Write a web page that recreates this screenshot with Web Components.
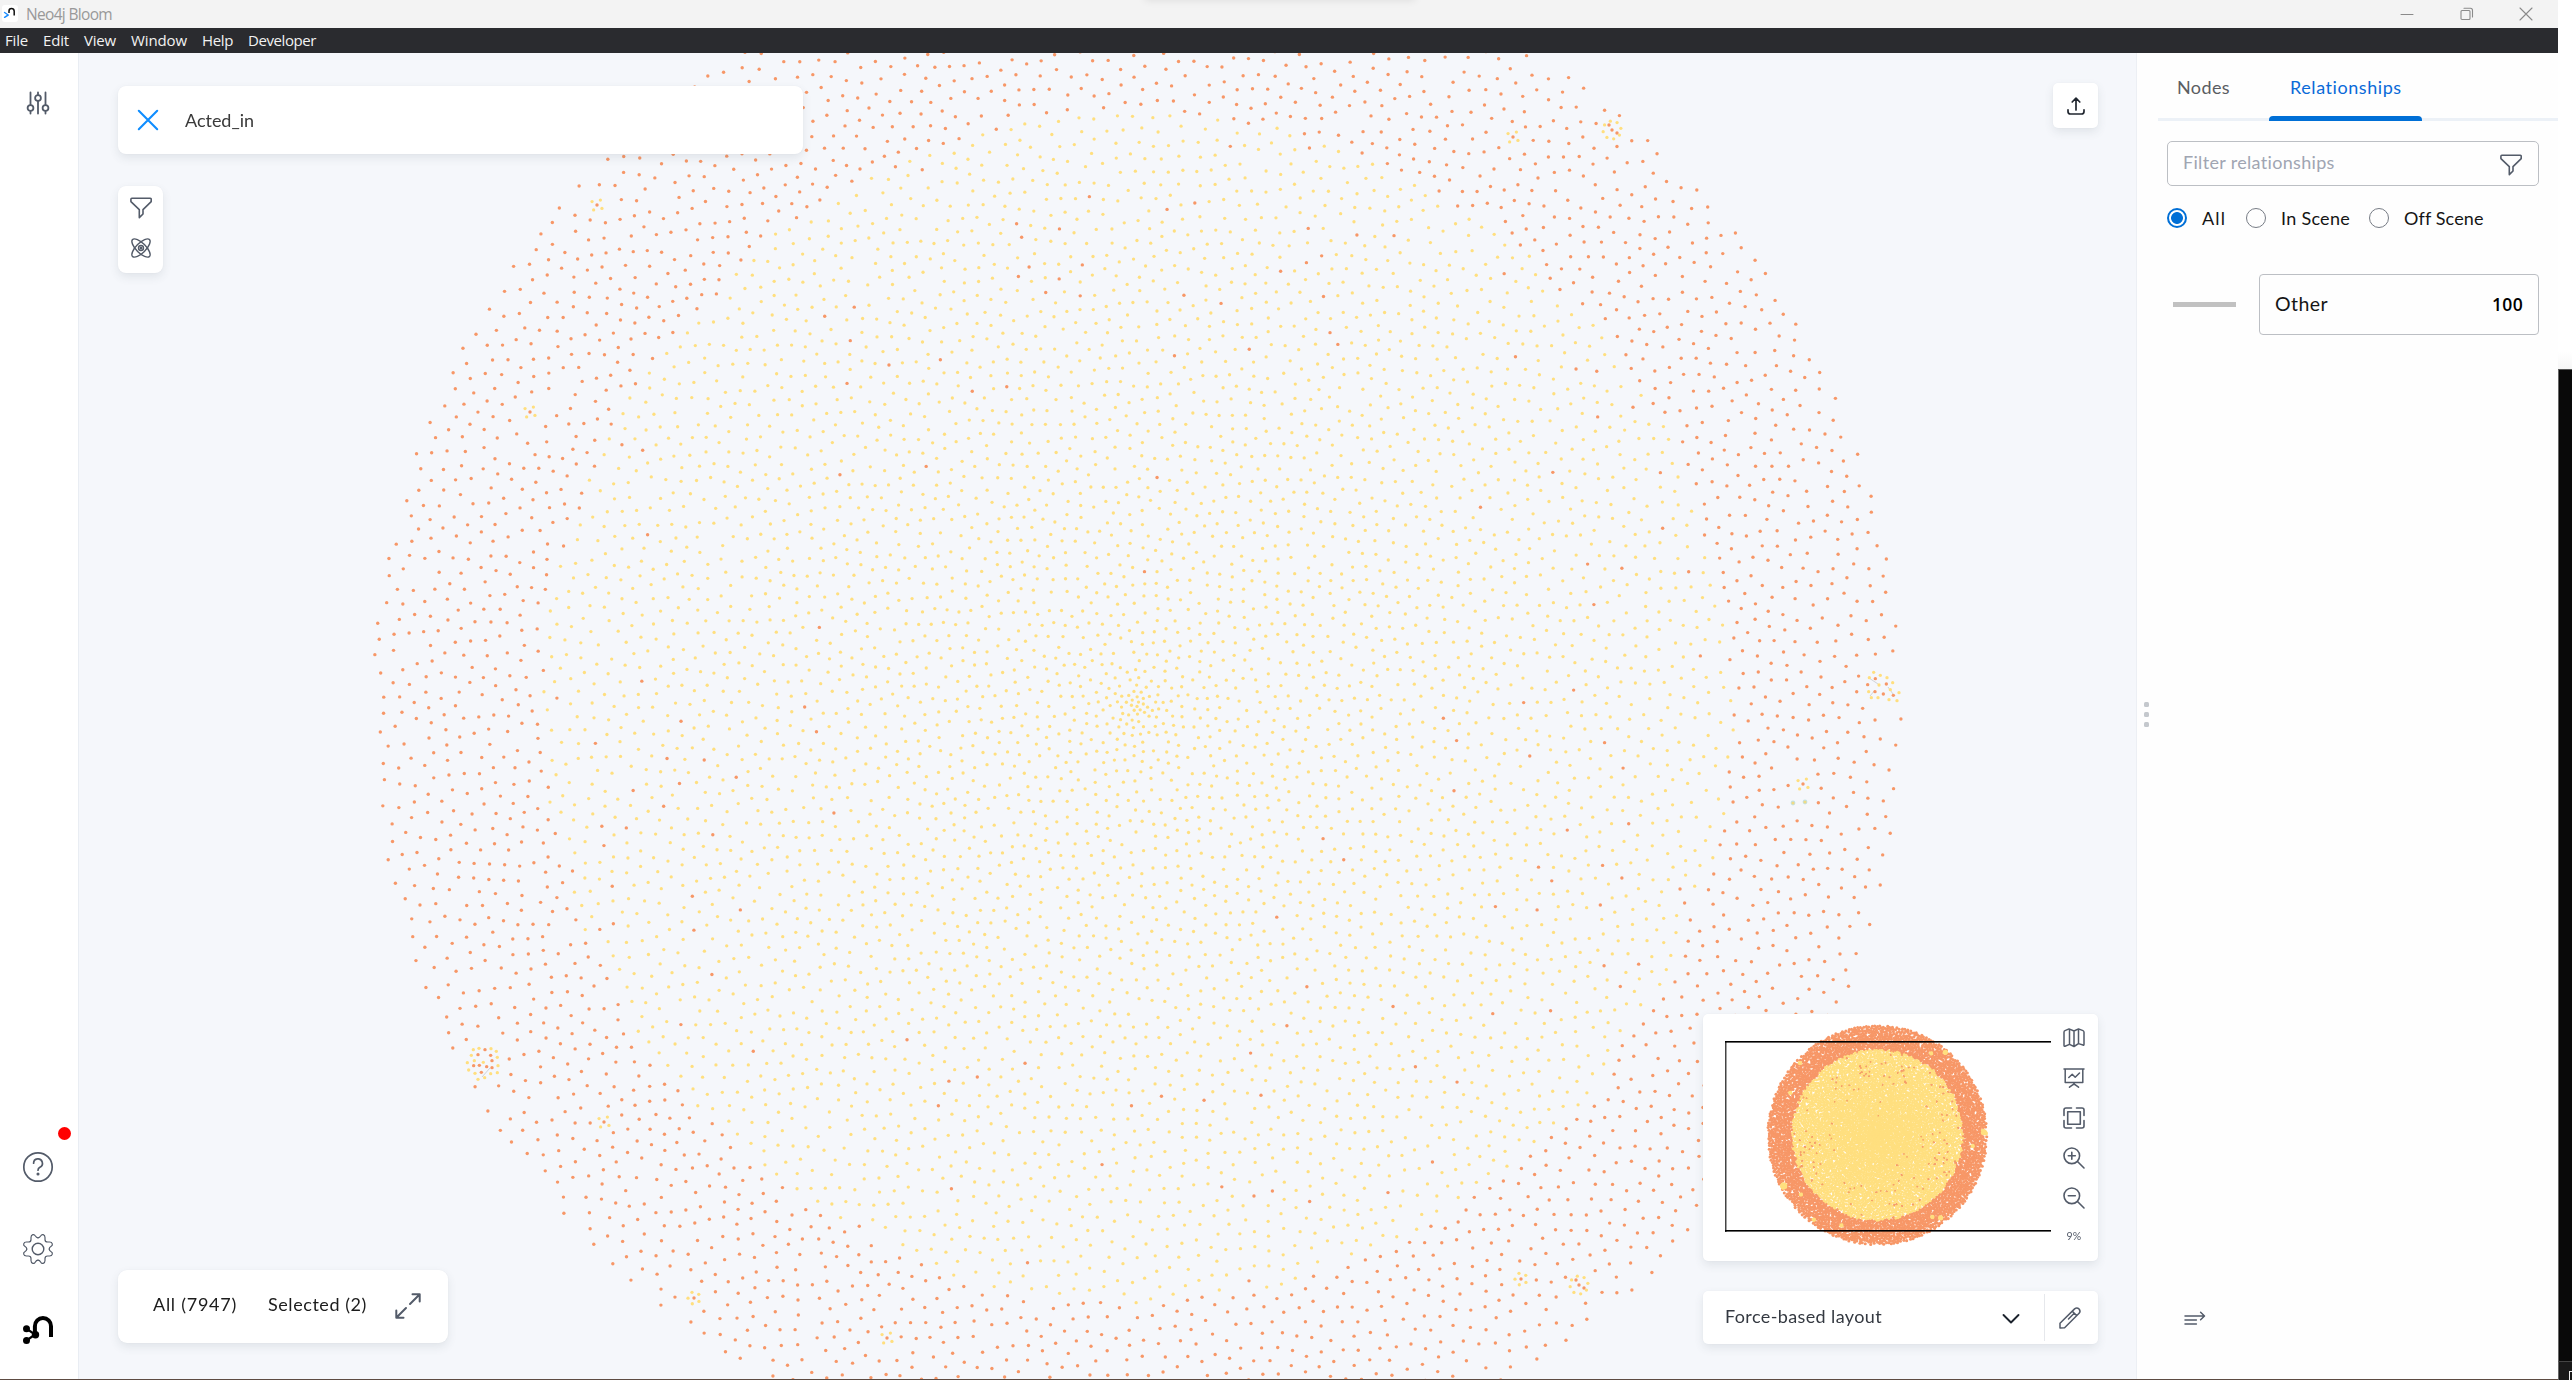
<!DOCTYPE html>
<html lang="en">
<head>
<meta charset="utf-8">
<title>Neo4j Bloom</title>
<style>
html,body{margin:0;height:100%;overflow:hidden;background:#fff}
body{font-family:Lato,"Open Sans",sans-serif}
</style>
</head>
<body>
<bloom-app></bloom-app>
<script>
const define=(name,html,setup)=>customElements.define(name,class extends HTMLElement{
  connectedCallback(){
    if(this.shadowRoot)return;
    const t=document.createElement('template');t.innerHTML=html;
    this.attachShadow({mode:'open'}).appendChild(t.content.cloneNode(true));
    if(setup)setup.call(this,this.shadowRoot);
  }
});

/* Text whose tracking is tuned so that it fills the width in its "w" attribute */
define('ui-label',`<style>:host{display:block;white-space:pre;flex:none;line-height:20px;font-size:18px}
span{display:inline-block}</style><span><slot></slot></span>`,function(root){
  const w=+this.getAttribute('w'),span=root.querySelector('span');
  if(!w)return;
  this.style.width=w+'px';
  const n=this.textContent.length;
  span.style.letterSpacing=((w-span.getBoundingClientRect().width)/n)+'px';
});

/* Icons: [width, height, stroke width, markup] */
const GEAR='M0,-11.2 Q1.6,-11.2 2.8,-13.2 Q3.6,-14.7 5.2,-14.3 Q7,-13.8 7,-11.6 L7,-9.6 Q7,-7 9.6,-7 L11.6,-7 Q13.8,-7 14.3,-5.2 Q14.7,-3.6 13.2,-2.8 Q11.2,-1.6 11.2,0';
const ICONS={
  sliders:[22,22,1.8,'<path d="M3.5.5V13M3.5 19.5V21.5M11 .5V2.500M11 9V21.500M18.500.5V13M18.500 19.5V21.500"/><circle cx="3.5" cy="16" r="2.9"/><circle cx="11" cy="6" r="2.9"/><circle cx="18.5" cy="16" r="2.9"/>'],
  help:[30,30,1.7,'<circle cx="15" cy="15" r="14.2"/><path d="M10.600 11.200a4.400 4.400 0 1 1 6.300 4c-1.500.7-1.900 1.500-1.900 3"/><circle cx="15" cy="22" r=".7" fill="currentColor"/>'],
  gear:[30,30,1.2,'<g transform="translate(15 15)">'+[0,90,180,270].map(a=>`<path transform="rotate(${a})" d="${GEAR}"/>`).join('')+'<circle r="5.800" stroke-width="1.4"/></g>'],
  logo:[30,28,4,'<path stroke-linecap="butt" d="M11.900 18.500V10.200a8.050 8.200 0 0 1 16.100 0V21"/><path stroke-width="2.200" d="M3.400 12.700 12 18.500 3.400 24.600"/><g fill="currentColor" stroke="none"><circle cx="3.500" cy="12.700" r="3.500"/><circle cx="3.500" cy="24.500" r="3.500"/><circle cx="12.500" cy="18.700" r="3.700"/></g>'],
  close:[20,20,2.1,'<path d="M.8.8 19.200 19.200M19.200.8.8 19.200"/>'],
  funnel:[22,22,1.6,'<path d="M1.800 1.200H20.200Q21.300 1.200 21.200 2.400V4.600L13 12.600V17L9.300 20.600V12.600L.9 4.600V2.400Q.9 1.200 1.800 1.200Z"/>'],
  atom:[20,20,1.4,'<ellipse cx="10" cy="10" rx="12" ry="4.800" transform="rotate(45 10 10)"/><ellipse cx="10" cy="10" rx="12" ry="4.800" transform="rotate(-45 10 10)"/><circle cx="10" cy="10" r="2.500"/><circle cx="10" cy="10" r=".8" fill="currentColor"/>'],
  expand:[26,26,2,'<path d="M15 11 24.500 1.500M17.500 1.300H24.700V8.500M11 15 1.500 24.500M1.300 17.500V24.700H8.500"/>'],
  share:[18,18,1.7,'<path d="M9 13V1.200M5.200 5 9 1.200 12.800 5M1 12.800V14.500Q1 17 3.500 17H14.500Q17 17 17 14.500V12.800"/>'],
  map:[22,20,1.5,'<path d="M1 4.200Q1 3 2 2.600L6 .9 11 3 15.500 .9 20 2.600Q21 3 21 4.200V16.300Q21 17.600 20 17L15.500 15.600 11 18.500 6.500 16.400 2 18.200Q1 18.500 1 17.300ZM6.500 1.200V16.400M11 3V18.500M15.500.9V15.600"/>'],
  board:[22,20,1.5,'<path d="M1 1H21M2.200 1V14.500H19.800V1M5.800 9.500 9.200 6.200 12.200 9.200 16.500 5M11 14.500V16.500M6.500 19.200 11 15.800 15.500 19.200"/>'],
  fit:[22,22,1.6,'<rect x="4.700" y="4.700" width="12.600" height="12.600"/><path d="M1 8.500V3Q1 1 3 1H8.500M13.500 1H19Q21 1 21 3V8.500M21 13.500V19Q21 21 19 21H13.500M8.500 21H3Q1 21 1 19V13.500"/>'],
  zoomin:[22,22,1.6,'<circle cx="8.800" cy="8.800" r="7.800"/><path d="M14.500 14.500 21 21M8.800 5.300V12.300M5.300 8.800H12.300"/>'],
  zoomout:[22,22,1.6,'<circle cx="8.800" cy="8.800" r="7.800"/><path d="M14.500 14.500 21 21M5.300 8.800H12.300"/>'],
  chevron:[18,12,1.9,'<path d="M1.500 2 9 9.500 16.500 2"/>'],
  pencil:[22,22,1.5,'<path d="M1 21V16.200L15.600 1.900Q17.800 0 20 1.900 22 4 20.100 6.300L5.600 20.700ZM13.300 4.300 17.700 8.600M15.200 6.300 9.500 12"/>'],
  list:[22,14,1.5,'<path d="M1 5H20.300M16.600 1.300 20.500 5 16.600 8.700M1 9H12.400M1 13H12.400"/>'],
  wmin:[12,12,1,'<path d="M0 6.500H12"/>'],
  wmax:[14,14,1.1,'<rect x="1" y="3.500" width="9" height="9" rx="1"/><path d="M4 1.200H10.500Q12.500 1.200 12.500 3.500V10"/>'],
  wclose:[14,14,1.1,'<path d="M1 1 13 13M13 1 1 13"/>'],
  app:[16,17,1.5,'<rect x="0" y="0" width="16" height="17" rx="3" fill="#fff" stroke="none"/><path stroke="#111" stroke-linecap="butt" d="M7 8V6Q7 3.600 9.500 3.600T12.200 6V10.500"/><g stroke="#1a8cff"><path d="M2.600 7.500 6.200 10 2.600 12.300"/></g>']
};
define('ui-icon','<style>:host{display:block;flex:none;color:#535b69}svg{display:block;overflow:visible}</style><div></div>',function(root){
  const [w,h,s,m]=ICONS[this.getAttribute('name')];
  root.querySelector('div').innerHTML=`<svg width="${w}" height="${h}" viewBox="0 0 ${w} ${h}" fill="none" stroke="currentColor" stroke-width="${s}" stroke-linecap="round" stroke-linejoin="round">${m}</svg>`;
});

/* Node positions, relative to the centre of the force layout */
const NODES=(()=>{
  let seed=77;
  const rnd=()=>{seed=(seed*1664525+1013904223)>>>0;return seed/4294967296};
  const N=7947,R=764,GA=Math.PI*(3-Math.sqrt(5));
  const area=(r,k)=>22+130*(1-Math.exp(-Math.pow(r/44,1.3)))+k*r;
  const count=k=>{let n=0;for(let r=.5;r<R;r++)n+=2*Math.PI*r/area(r,k);return n};
  let lo=0,hi=1;
  for(let i=0;i<30;i++){const m=(lo+hi)/2;count(m)>N?lo=m:hi=m}
  const k=(lo+hi)/2;
  const pts=[];
  let n=0,r=.2;
  for(let i=0;i<N;i++){
    while(n<i+.5){n+=2*Math.PI*r*.1/area(r,k);r+=.1}
    const s=Math.sqrt(area(r,k))*.62,a=i*GA;
    pts.push([r*Math.cos(a)+(rnd()*2-1)*s,r*Math.sin(a)+(rnd()*2-1)*s]);
  }
  /* collision passes: neighbours nearer than the local spacing push each other away */
  const cell=18,W=100;
  for(let it=0;it<14;it++){
    const grid=new Map();
    pts.forEach((p,i)=>{
      const key=(Math.floor(p[1]/cell)+50)*W+Math.floor(p[0]/cell)+50;
      (grid.get(key)||grid.set(key,[]).get(key)).push(i);
    });
    pts.forEach((p,i)=>{
      const gx=Math.floor(p[0]/cell)+50,gy=Math.floor(p[1]/cell)+50;
      const want=Math.sqrt(area(Math.hypot(p[0],p[1]),k))*.97;
      for(let dy=-1;dy<2;dy++)for(let dx=-1;dx<2;dx++)for(const j of grid.get((gy+dy)*W+gx+dx)||[]){
        if(j<=i)continue;
        const q=pts[j],x=q[0]-p[0],y=q[1]-p[1],d=Math.hypot(x,y)||.01;
        if(d<want){const f=(want-d)/d*.24;p[0]-=x*f;p[1]-=y*f;q[0]+=x*f;q[1]+=y*f}
      }
    });
    for(const p of pts){const d=Math.hypot(p[0],p[1]);if(d>R){p[0]*=R/d;p[1]*=R/d}}
  }
  const clusters=[[-540,-503,4],[-607,-296,4],[666,76,4],[-533,414,4],[-443,590,5],[-250,630,4],[384,571,5],[442,577,8],[376,-571,4],[475,-578,8]];
  const out=[];
  for(const [x,y] of pts){
    const d=Math.hypot(x,y)+(rnd()-.5)*8;
    const p=d<200?.002:d<320?.008:d<430?.035:.045;
    const o=d>595||rnd()<p;
    if(clusters.some(c=>Math.hypot(x-c[0],y-c[1])<9+c[2]*.8)||Math.hypot(x+654,y-354)<26||Math.hypot(x-746,y+22)<22)continue;
    if(Math.hypot(x-656,y-95)<7||Math.hypot(x-668,y-94)<7)continue;
    out.push([x,y,o?1:0]);
  }
  for(const [x,y,m] of clusters){
    out.push([x,y,1]);
    if(m>5)out.push([x+5,y+3,1],[x-3,y-5,1]);
    for(let j=0;j<m;j++){const a=j*2*Math.PI/m+.6,q=m>5?9:6;out.push([x+q*Math.cos(a),y+q*Math.sin(a),0])}
  }
  /* two larger groups, measured from their own corners */
  const group=(ox,oy,yel,org)=>{yel.forEach(p=>out.push([ox+p[0]/3,oy+p[1]/3,0]));org.forEach(p=>out.push([ox+p[0]/3,oy+p[1]/3,1]))};
  group(643,-88,[[281,157],[301,166],[268,173],[321,173],[338,188],[297,195],[331,209],[266,215],[357,218],[274,233],[294,233],[327,239],[351,242]],[[286,176],[263,194],[319,192],[285,215],[310,222],[340,226]]);
  group(-697,322,[[100,59],[117,55],[153,56],[169,64],[94,76],[172,82],[103,92],[82,98],[130,97],[174,107],[86,120],[105,130],[152,131],[172,128],[134,143],[114,148]],[[135,59],[114,74],[152,76],[156,92],[101,107],[118,106],[140,110],[156,113],[124,127]]);
  return out;
})();
const COLORS=['#ffdf7f','#f79767'];
const plot=(c,ox,oy,k,r0,r1)=>{
  for(const t of [1,0]){
    c.fillStyle=COLORS[t];
    for(const p of NODES)if(p[2]===t){c.beginPath();c.arc(ox+p[0]*k,oy+p[1]*k,t?r1:r0,0,7);c.fill()}
  }
};
define('graph-scene','<style>:host{display:block}canvas{display:block}</style><canvas width="2058" height="1326"></canvas>',function(root){
  const c=root.querySelector('canvas').getContext('2d');
  c.strokeStyle='#cfd3d8';c.lineWidth=1;
  for(const l of [[403,1024,411,1015],[1790,625,1799,631],[1809,634,1814,641],[1791,643,1796,637]]){c.beginPath();c.moveTo(l[0],l[1]);c.lineTo(l[2],l[3]);c.stroke()}
  plot(c,1058,655,1,1.65,1.7);
  for(const p of [[1714,750],[1726,749]]){
    c.fillStyle='#c3e3e8';c.beginPath();c.arc(p[0],p[1],2.4,0,7);c.fill();
    c.fillStyle='#efdb85';c.beginPath();c.arc(p[0],p[1],1.6,0,7);c.fill();
  }
});
define('mini-map','<style>:host{display:block}canvas{display:block}</style><canvas width="348" height="247"></canvas>',function(root){
  const c=root.querySelector('canvas').getContext('2d');
  plot(c,174.300,121.200,1/6.98,1.4,1.55);
  /* isolated actors stay visible above the yellow core */
  c.fillStyle='#f3a568';
  for(const p of NODES)if(p[2]&&Math.hypot(p[0],p[1])<590){c.beginPath();c.arc(174.3+p[0]/6.98,121.2+p[1]/6.98,.75,0,7);c.fill()}
  c.fillStyle='#444';c.fillRect(22,28,1.500,190);
  c.fillStyle='#000';c.fillRect(22,27,326,1.600);c.fillRect(22,216,326,1.600);
});

define('ui-card','<style>:host{display:flex;box-sizing:border-box;background:#fff;border-radius:5px;box-shadow:0 4px 10px rgba(60,80,90,.11),0 0 2px rgba(60,80,100,.06);flex:none}</style><slot></slot>');

define('title-bar',`<style>:host{display:flex;height:28px;background:#f3f3f3;align-items:center;color:#999;font-family:"Open Sans",sans-serif;position:relative;flex:none;overflow:hidden}
ui-icon.app{margin:-2px 8px 0 2px}ui-label{font-size:15.500px;margin-top:-1px}
.sp{flex:1}.win{display:flex;gap:46px;align-items:center;padding-right:25px;margin-top:-1px}.win ui-icon{color:#8a8a8a}.win ui-icon:first-child{margin-right:1px}.win ui-icon:last-child{margin-left:-1px}
.shade{position:absolute;left:1145px;top:-14px;width:270px;height:12px;box-shadow:0 2px 9px rgba(0,0,0,.1)}</style>
<ui-icon class="app" name="app"></ui-icon><ui-label w="86">Neo4j Bloom</ui-label><div class="sp"></div>
<div class="win"><ui-icon name="wmin"></ui-icon><ui-icon name="wmax"></ui-icon><ui-icon name="wclose"></ui-icon></div><div class="shade"></div>`);
define('menu-bar',`<style>:host{display:flex;height:25px;background:#2a2b2f;color:#f2f2f2;font-family:"Open Sans",sans-serif;align-items:center;padding-left:5px;flex:none;gap:15px}
ui-label{font-size:15px;margin-top:-1px}</style>
<ui-label w="23">File</ui-label><ui-label w="26">Edit</ui-label><ui-label w="32">View</ui-label><ui-label w="56">Window</ui-label><ui-label w="31">Help</ui-label><ui-label w="68">Developer</ui-label>`);
define('side-bar',`<style>:host{display:flex;flex-direction:column;align-items:center;width:79px;box-sizing:border-box;padding:39px 2px 35px 0;background:#fff;border-right:1px solid #e9edf3;flex:none}
.sp{flex:1}.dot{width:13px;height:13px;border-radius:50%;background:#f00;margin:0 0 12px 53px}
.gear{margin:52px 0}.logo{color:#000}</style>
<ui-icon name="sliders"></ui-icon><div class="sp"></div><div class="dot"></div>
<ui-icon name="help"></ui-icon><ui-icon class="gear" name="gear"></ui-icon><ui-icon class="logo" name="logo"></ui-icon>`);

define('search-card',`<style>:host{display:block}ui-card{width:685px;height:68px;border-radius:8px;align-items:center;padding-left:20px;gap:27px}
ui-icon{color:#0f8dff}ui-label{color:#3a3a3a}</style><ui-card><ui-icon name="close"></ui-icon><ui-label w="69">Acted_in</ui-label></ui-card>`);
define('scene-tools',`<style>:host{display:block}ui-card{width:45px;height:87px;border-radius:8px;flex-direction:column;align-items:center;padding:11px 0 0 0;gap:19px}</style>
<ui-card><ui-icon name="funnel"></ui-icon><ui-icon name="atom"></ui-icon></ui-card>`);
define('selection-card',`<style>:host{display:block}ui-card{width:330px;height:73px;border-radius:9px;align-items:center;padding-left:35px;color:#1c1c1c}
ui-label+ui-label{margin:0 28px 0 31px}ui-label{margin-top:-6px!important}ui-icon{margin-top:-1px}</style>
<ui-card><ui-label w="84">All (7947)</ui-label><ui-label w="99">Selected (2)</ui-label><ui-icon name="expand"></ui-icon></ui-card>`);
define('map-card',`<style>:host{display:block}ui-card{width:395px;height:247px}
.col{display:flex;flex-direction:column;align-items:center;padding:14px 0 0 12px;width:22px}
.col ui-icon{height:22px;margin-bottom:18px}.col ui-icon:nth-child(2){margin-bottom:17px}ui-label{font-size:10.500px;color:#535b69;line-height:12px;margin-top:3px}</style>
<ui-card><mini-map></mini-map><div class="col"><ui-icon name="map"></ui-icon><ui-icon name="board"></ui-icon><ui-icon name="fit"></ui-icon><ui-icon name="zoomin"></ui-icon><ui-icon name="zoomout"></ui-icon><ui-label w="15">9%</ui-label></div></ui-card>`);
define('layout-card',`<style>:host{display:block}ui-card{width:395px;height:53px;align-items:center;padding-left:22px;color:#343941}
.sp{flex:1}.chev{color:#1b222c;margin-right:24px;margin-top:2px}.div{width:1px;height:47px;background:#e6e8ec}.pen{margin:0 17px 0 14px}ui-label{margin-top:-4px}</style>
<ui-card><ui-label w="157">Force-based layout</ui-label><div class="sp"></div><ui-icon class="chev" name="chevron"></ui-icon><div class="div"></div><ui-icon class="pen" name="pencil"></ui-icon></ui-card>`);

define('scene-view',`<style>:host{display:block;position:relative;width:2057px;background:#f5f7fb;overflow:hidden;flex:none}
.over{position:absolute;inset:0;display:flex;justify-content:space-between}
.l,.r{display:flex;flex-direction:column;box-sizing:border-box}.l{padding:33px 0 36px 39px}.r{padding:30px 38px 35px 0;align-items:flex-end}
.sp{flex:1}scene-tools{margin-top:32px}layout-card{margin-top:30px}.exp{width:45px;height:45px;align-items:center;justify-content:center}.exp ui-icon{color:#20262f}</style>
<graph-scene></graph-scene>
<div class="over"><div class="l"><search-card></search-card><scene-tools></scene-tools><div class="sp"></div><selection-card></selection-card></div>
<div class="r"><ui-card class="exp"><ui-icon name="share"></ui-icon></ui-card><div class="sp"></div><map-card></map-card><layout-card></layout-card></div></div>`);

define('ui-radio',`<style>:host{display:flex;align-items:center;gap:15px;color:#151515}
i{box-sizing:border-box;width:20px;height:20px;border-radius:50%;border:1px solid #777c85;flex:none}
:host([checked]) i{border:2px solid #006fd6;background:radial-gradient(circle,#006fd6 5.500px,#fff 6.300px)}</style><i></i><slot></slot>`);
define('legend-panel',`<style>:host{display:flex;flex:1;background:#fefefe;border-left:1px solid #eceff4;box-sizing:border-box}
.grip{width:21px;flex:none;display:flex;flex-direction:column;justify-content:center;gap:5px;padding:0 0 4px 7px;box-sizing:border-box}
.grip i{width:5px;height:5px;border-radius:1.500px;background:#c4c8cd}
.main{flex:1;display:flex;flex-direction:column}
.tabs{display:flex;height:68px;box-sizing:border-box;border-bottom:3px solid #ecf1f7}
.tab{height:68px;box-sizing:border-box;padding:24px 19px 0;color:#5a5d62}
.tab.on{padding:24px 20px 0 21px;width:153px;margin-left:20px;color:#0a6ad8;position:relative}
.tab.on:after{content:"";position:absolute;left:0;right:0;bottom:0;height:5px;background:#006fd6;border-radius:4px 4px 0 0}
.body{display:flex;flex-direction:column;padding:20px 19px 0 9px;flex:1}
.filter{height:45px;box-sizing:border-box;border:1px solid #bcbfc4;border-radius:5px;display:flex;justify-content:space-between;align-items:center;padding:0 16px 0 15px;color:#a0a5b2}
.filter ui-label{margin-top:-3px}.filter ui-icon{margin-top:3px}
.radios{display:flex;margin-top:22px}.radios ui-radio+ui-radio{margin-left:20px}.radios ui-radio+ui-radio+ui-radio{margin-left:19px}
.row{display:flex;align-items:center;margin-top:46px;justify-content:space-between}
.line{width:63px;height:5px;background:#c1c1c1;margin:0 0 1px 6px}
.box{width:280px;height:61px;box-sizing:border-box;border:1px solid #bcbfc4;border-radius:4px;display:flex;align-items:center;justify-content:space-between;padding:0 15px 2px;color:#151515}
.box ui-label:first-child{font-size:19.500px}.box ui-label+ui-label{font-family:"Open Sans",sans-serif;font-weight:600;font-size:17.500px;color:#000}
.sp{flex:1}.foot{margin:0 0 54px 17px}</style>
<div class="grip"><i></i><i></i><i></i></div>
<div class="main"><div class="tabs"><div class="tab"><ui-label w="53">Nodes</ui-label></div><div class="tab on"><ui-label w="112">Relationships</ui-label></div></div>
<div class="body"><div class="filter"><ui-label w="152">Filter relationships</ui-label><ui-icon name="funnel"></ui-icon></div>
<div class="radios"><ui-radio checked><ui-label w="24">All</ui-label></ui-radio><ui-radio><ui-label w="69">In Scene</ui-label></ui-radio><ui-radio><ui-label w="79">Off Scene</ui-label></ui-radio></div>
<div class="row"><div class="line"></div><div class="box"><ui-label w="53">Other</ui-label><ui-label w="31">100</ui-label></div></div>
<div class="sp"></div><ui-icon class="foot" name="list"></ui-icon></div></div>`);

define('bloom-app',`<style>:host{display:flex;width:2572px;height:1380px;overflow:hidden}
.win{width:2558px;display:flex;flex-direction:column;flex:none}.mid{display:flex;height:1326px;flex:none}.edge{height:1px;background:#5d4b42}
.strip{width:14px;display:flex;flex-direction:column}.top{height:369px;background:linear-gradient(#fff 352px,#f6f6f6)}
.dark{height:992px;box-sizing:border-box;background:#090909;border-left:1px solid #666;border-top:1px solid #555}
.low{flex:1;box-sizing:border-box;background:#191919;border-left:1px solid #666;border-top:1px solid #444;display:flex;justify-content:flex-end;align-items:flex-end}
.low i{width:3px;height:9px;box-sizing:border-box;border-left:1.500px solid #eee;border-top:1px solid #eee}</style>
<div class="win"><title-bar></title-bar><menu-bar></menu-bar><div class="mid"><side-bar></side-bar><scene-view></scene-view><legend-panel></legend-panel></div><div class="edge"></div></div>
<div class="strip"><div class="top"></div><div class="dark"></div><div class="low"><i></i></div></div>`);
</script>
</body>
</html>
